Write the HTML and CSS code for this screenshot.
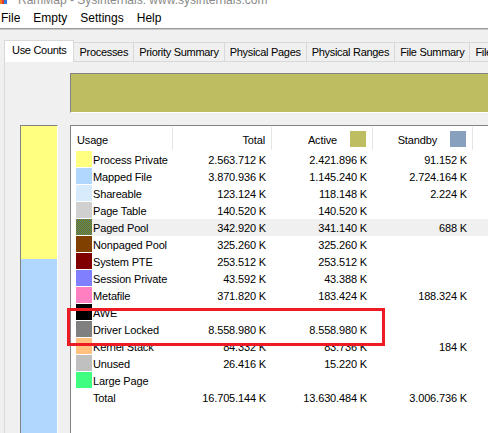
FILE: index.html
```html
<!DOCTYPE html>
<html lang="en">
<head>
    <meta charset="UTF-8">
    <meta name="viewport" content="width=device-width, initial-scale=1.0">
    <title>RamMap - Sysinternals: www.sysinternals.com</title>
    <link rel="stylesheet" href="styles.css">
</head>
<body>
    <div class="window">
        <div class="titlebar">
            <svg class="app-icon" width="7" height="4" viewBox="0 0 7 4">
                <rect x="0" y="0" width="2" height="4" fill="#f47b20"/>
                <rect x="2" y="0" width="2" height="4" fill="#e03a2f"/>
                <rect x="4" y="0" width="3" height="4" fill="#2f7ad8"/>
            </svg>
            <span class="title-text">RamMap - Sysinternals: www.sysinternals.com</span>
        </div>

        <div class="menubar">
            <span>File</span>
            <span>Empty</span>
            <span>Settings</span>
            <span>Help</span>
        </div>

        <div class="tab-strip">
            <div class="tab selected">Use Counts</div>
            <div class="tab">Processes</div>
            <div class="tab">Priority Summary</div>
            <div class="tab">Physical Pages</div>
            <div class="tab">Physical Ranges</div>
            <div class="tab">File Summary</div>
            <div class="tab">File Details</div>
        </div>

        <div class="tab-page">
            <div class="page-grid">
                <div></div>
                <div class="active-bar"></div>

                <!-- barra apilada -->
                <div class="stack-bar">
                    <div class="seg seg-private"></div>
                    <div class="seg seg-mapped"></div>
                </div>

                <div class="list">
                    <div class="list-header">
                        <div class="hcell">Usage</div>
                        <div class="hcell num">Total</div>
                        <div class="hcell num">Active <span class="hswatch sw-active"></span></div>
                        <div class="hcell num">Standby <span class="hswatch sw-standby"></span></div>
                        <div class="hcell last"></div>
                    </div>

                    <div class="row">
                        <div class="label"><span class="swatch c-private"></span><span class="name">Process Private</span></div>
                        <div class="cell">2.563.712 K</div><div class="cell">2.421.896 K</div><div class="cell">91.152 K</div><div class="cell"></div>
                    </div>
                    <div class="row">
                        <div class="label"><span class="swatch c-mapped"></span><span class="name">Mapped File</span></div>
                        <div class="cell">3.870.936 K</div><div class="cell">1.145.240 K</div><div class="cell">2.724.164 K</div><div class="cell"></div>
                    </div>
                    <div class="row">
                        <div class="label"><span class="swatch c-shareable"></span><span class="name">Shareable</span></div>
                        <div class="cell">123.124 K</div><div class="cell">118.148 K</div><div class="cell">2.224 K</div><div class="cell"></div>
                    </div>
                    <div class="row">
                        <div class="label"><span class="swatch c-pagetable"></span><span class="name">Page Table</span></div>
                        <div class="cell">140.520 K</div><div class="cell">140.520 K</div><div class="cell"></div><div class="cell"></div>
                    </div>
                    <div class="row hot">
                        <div class="label"><span class="swatch c-paged"></span><span class="name">Paged Pool</span></div>
                        <div class="cell">342.920 K</div><div class="cell">341.140 K</div><div class="cell">688 K</div><div class="cell"></div>
                    </div>
                    <div class="row">
                        <div class="label"><span class="swatch c-nonpaged"></span><span class="name">Nonpaged Pool</span></div>
                        <div class="cell">325.260 K</div><div class="cell">325.260 K</div><div class="cell"></div><div class="cell"></div>
                    </div>
                    <div class="row">
                        <div class="label"><span class="swatch c-pte"></span><span class="name">System PTE</span></div>
                        <div class="cell">253.512 K</div><div class="cell">253.512 K</div><div class="cell"></div><div class="cell"></div>
                    </div>
                    <div class="row">
                        <div class="label"><span class="swatch c-session"></span><span class="name">Session Private</span></div>
                        <div class="cell">43.592 K</div><div class="cell">43.388 K</div><div class="cell"></div><div class="cell"></div>
                    </div>
                    <div class="row">
                        <div class="label"><span class="swatch c-metafile"></span><span class="name">Metafile</span></div>
                        <div class="cell">371.820 K</div><div class="cell">183.424 K</div><div class="cell">188.324 K</div><div class="cell"></div>
                    </div>
                    <div class="row">
                        <div class="label"><span class="swatch c-awe"></span><span class="name">AWE</span></div>
                        <div class="cell"></div><div class="cell"></div><div class="cell"></div><div class="cell"></div>
                    </div>
                    <div class="row">
                        <div class="label"><span class="swatch c-driver"></span><span class="name">Driver Locked</span></div>
                        <div class="cell">8.558.980 K</div><div class="cell">8.558.980 K</div><div class="cell"></div><div class="cell"></div>
                    </div>
                    <div class="row">
                        <div class="label"><span class="swatch c-kernel"></span><span class="name">Kernel Stack</span></div>
                        <div class="cell">84.332 K</div><div class="cell">83.736 K</div><div class="cell">184 K</div><div class="cell"></div>
                    </div>
                    <div class="row">
                        <div class="label"><span class="swatch c-unused"></span><span class="name">Unused</span></div>
                        <div class="cell">26.416 K</div><div class="cell">15.220 K</div><div class="cell"></div><div class="cell"></div>
                    </div>
                    <div class="row">
                        <div class="label"><span class="swatch c-large"></span><span class="name">Large Page</span></div>
                        <div class="cell"></div><div class="cell"></div><div class="cell"></div><div class="cell"></div>
                    </div>
                    <div class="row">
                        <div class="label"><span class="swatch"></span><span class="name">Total</span></div>
                        <div class="cell">16.705.144 K</div><div class="cell">13.630.484 K</div><div class="cell">3.006.736 K</div><div class="cell"></div>
                    </div>
                </div>
            </div>
        </div>
    </div>

    <!-- marco rojo de anotacion -->
    <div class="annotation"></div>
</body>
</html>
```

FILE: styles.css
```css
body {
    margin: 0;
    width: 488px;
    height: 433px;
    overflow: hidden;
    position: relative;
    background: #f0f0f0;
    font-family: "Liberation Sans", Arial, sans-serif;
    color: #000;
}

.window {
    width: 760px;
}

.titlebar {
    height: 8px;
    overflow: hidden;
    background: #fff;
    display: flex;
    align-items: flex-start;
}

.app-icon {
    display: block;
    flex: none;
}

.title-text {
    margin-left: 11px;
    margin-top: -6px;
    font-size: 12px;
    line-height: 12px;
    color: #8a8a8a;
    white-space: nowrap;
}

.menubar {
    height: 20px;
    line-height: 20px;
    font-size: 12px;
    background: #fff;
    display: flex;
    gap: 13px;
    padding-left: 1px;
    border-bottom: 1px solid #9a9a9a;
    box-shadow: 0 1px 0 #c8c8c8;
}

.tab-strip {
    display: flex;
    align-items: flex-end;
    margin-top: 11px;
    padding-left: 4px;
    font-size: 11px;
    letter-spacing: -0.3px;
    position: relative;
    z-index: 1;
}

.tab {
    padding: 3px 5px 2px;
    line-height: 13px;
    border: 1px solid #d9d9d9;
    border-bottom: none;
    background: #f0f0f0;
    margin-left: -1px;
    white-space: nowrap;
}

.tab.selected {
    margin-left: 0;
    padding: 3px 7px 5px;
    margin-bottom: -1px;
    background: #fff;
    position: relative;
    z-index: 2;
}

.tab-page {
    border-top: 1px solid #d9d9d9;
    border-left: 1px solid #d9d9d9;
    margin-left: 4px;
    padding: 11px 0 0 15px;
    height: 380px;
}

.page-grid {
    display: grid;
    grid-template-columns: 38px 680px;
    grid-template-rows: 40px auto;
    column-gap: 12px;
    row-gap: 12px;
}

.active-bar {
    background: #bebd61;
    border-top: 1px solid #828282;
    border-left: 1px solid #828282;
    border-bottom: 1px solid #fff;
}

.stack-bar {
    height: 320px;
    border-top: 1px solid #828282;
    border-left: 1px solid #828282;
    border-right: 1px solid #fff;
    display: flex;
    flex-direction: column;
}

.seg-private {
    height: 133px;
    background: #ffff80;
}

.seg-mapped {
    flex: 1;
    background: #b0d8ff;
}

.list {
    height: 320px;
    background: #fff;
    border-top: 1px solid #828282;
    border-left: 1px solid #828282;
    font-size: 11px;
    letter-spacing: -0.15px;
}

.list-header,
.row {
    display: grid;
    grid-template-columns: 102px 99px 101px 100px 1fr;
}

.list-header {
    height: 25px;
}

.hcell {
    margin: 1px 0;
    height: 23px;
    padding: 4px 6px 0;
    line-height: 19px;
    box-sizing: border-box;
    border-right: 1px solid #e5e5e5;
    display: flex;
    align-items: flex-start;
    white-space: nowrap;
}

.hcell.num {
    justify-content: flex-end;
}

.hcell.last {
    border-right: none;
}

.hswatch {
    width: 16px;
    height: 16px;
    margin-left: 13px;
    flex: none;
}

.sw-active {
    background: #bebd61;
}

.sw-standby {
    background: #87a0be;
}

.row {
    height: 17px;
}

.label {
    display: flex;
    align-items: flex-start;
    padding-left: 5px;
}

.swatch {
    width: 16px;
    height: 16px;
    flex: none;
}

.name {
    flex: 1;
    padding: 2px 0 0 1px;
    line-height: 15px;
    height: 17px;
    box-sizing: border-box;
    white-space: nowrap;
}

.cell {
    padding: 2px 6px 0 0;
    line-height: 15px;
    text-align: right;
    white-space: nowrap;
}

.row.hot .name,
.row.hot .cell {
    background: #f0f0f0;
}

.c-private { background: #ffff80; }
.c-mapped { background: #b0d8ff; }
.c-shareable { background: #d8ebfc; }
.c-pagetable { background: #d0d0d0; }
.c-paged {
    background: repeating-conic-gradient(#808000 0 25%, #4c7b83 0 50%) 0 0 / 2px 2px;
}
.c-nonpaged { background: #804000; }
.c-pte { background: #800000; }
.c-session { background: #8080ff; }
.c-metafile { background: #ff80c0; }
.c-awe { background: #000; }
.c-driver { background: #808080; }
.c-kernel { background: #ffc080; }
.c-unused { background: #c0c0c0; }
.c-large { background: #40ff80; }

.annotation {
    position: absolute;
    left: 67px;
    top: 308px;
    width: 318px;
    height: 38px;
    box-sizing: border-box;
    border: 3px solid #ed1c24;
}
```
